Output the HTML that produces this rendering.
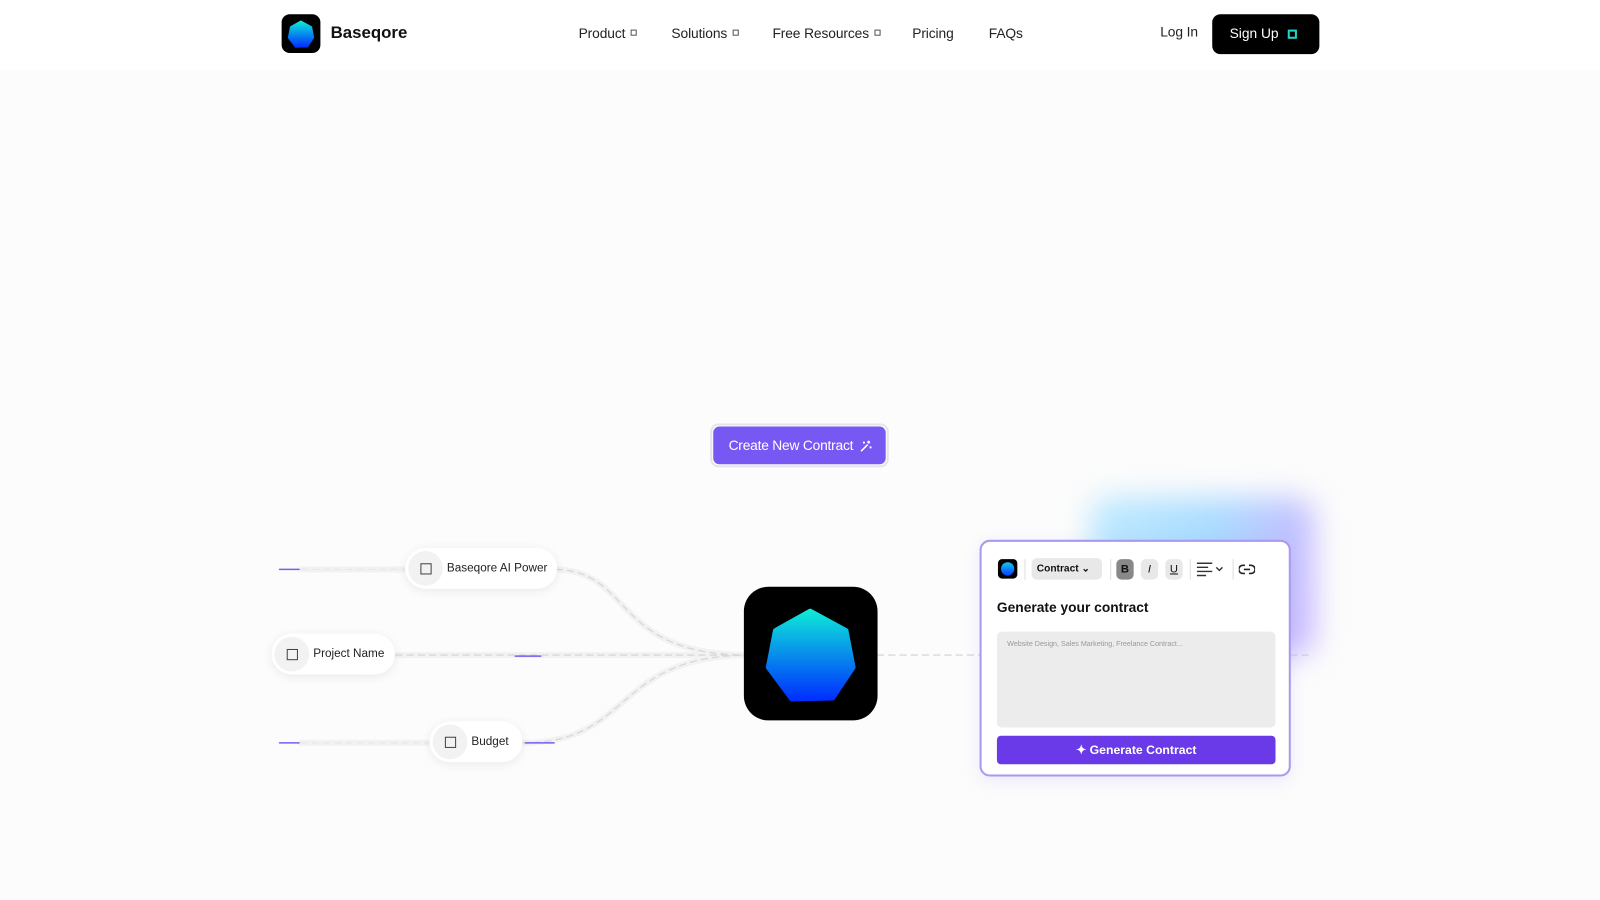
<!DOCTYPE html>
<html><head><meta charset="utf-8">
<style>
*{margin:0;padding:0;box-sizing:border-box}
body{width:1600px;height:900px;background:#fcfcfc;font-family:"Liberation Sans",sans-serif;overflow:hidden;color:#111}
#w{position:absolute;left:0;top:0;width:1568px;height:882px;transform:scale(1.0204);transform-origin:0 0}
.hdr{position:absolute;left:0;top:0;width:1568px;height:68px;background:#fff}
.logo{position:absolute;left:276px;top:14px;width:38px;height:38px;background:#000;border-radius:8px}
.brand{position:absolute;left:324px;top:23px;font-size:16.5px;font-weight:bold;color:#111}
.nav{position:absolute;top:25px;font-size:13.5px;color:#222;letter-spacing:-0.1px}
.sq{display:inline-block;width:6px;height:6px;border:1px solid #555;margin-left:5px;vertical-align:2px}
.signup{position:absolute;left:1188px;top:14px;width:105px;height:39px;background:#000;border-radius:8px;color:#fff;font-size:13.5px;padding:11px 0 0 17px}
.signup i{position:absolute;left:74px;top:15px;width:9px;height:9px;border:2px solid #1fd6c8}
.cta{position:absolute;left:696px;top:415px;width:175px;height:43px;border:2px solid #e4e4ea;border-radius:8px;padding:1px}
.cta div{background:#7858f2;border-radius:6px;height:100%;color:#fff;font-size:13.5px;padding:11px 0 0 15px;position:relative;letter-spacing:-0.2px}
.pill{position:absolute;height:40px;background:#fff;border-radius:20px;box-shadow:0 2px 10px rgba(0,0,0,.08);font-size:11.5px;color:#222}
.pill .ic{position:absolute;left:3px;top:3px;width:34px;height:34px;border-radius:50%;background:#f2f2f3}
.pill .ic:after{content:"";position:absolute;left:12px;top:12px;width:9px;height:9px;border:1px solid #444}
.pill span{position:absolute;left:41px;top:14px;white-space:nowrap}
.center{position:absolute;left:729px;top:575px;width:131px;height:131px;background:#000;border-radius:24px}
.glow{position:absolute;left:1068px;top:488px;width:220px;height:155px;background:linear-gradient(100deg,#bfe9ff,#a9dcff 50%,#cdb3ff);filter:blur(14px);border-radius:20px}
.card{position:absolute;left:960px;top:529px;width:305px;height:232px;background:#fff;border:2px solid #a79af0;border-radius:10px;box-shadow:0 4px 16px rgba(120,100,240,.12)}
.tb{position:absolute;font-size:10px;font-weight:bold}
.ta{position:absolute;left:15px;top:88px;width:273px;height:94px;background:#ececec;border-radius:5px;font-size:7px;color:#999;padding:9px 10px}
.gen{position:absolute;left:15px;top:190px;width:273px;height:28px;background:#6a3ae8;border-radius:4px;color:#fff;font-size:12px;font-weight:bold;text-align:center;padding-top:7px}
.sep{position:absolute;top:17px;width:1px;height:20px;background:#ddd}
</style></head><body><div id="w">
<div class="hdr"></div>
<div class="logo"><svg width="38" height="38" viewBox="0 0 131 131"><defs><linearGradient id="g1" x1="0" y1="0" x2="0" y2="1"><stop offset="0" stop-color="#0ee8d8"/><stop offset="1" stop-color="#0030ff"/></linearGradient></defs><polygon points="65,24 100,43 107,79 87,109 47,110 24,79 31,43" fill="url(#g1)" stroke="url(#g1)" stroke-width="6" stroke-linejoin="round"/></svg></div>
<div class="brand">Baseqore</div>
<div class="nav" style="left:567px">Product<i class="sq"></i></div>
<div class="nav" style="left:658px">Solutions<i class="sq"></i></div>
<div class="nav" style="left:757px">Free Resources<i class="sq"></i></div>
<div class="nav" style="left:894px">Pricing</div>
<div class="nav" style="left:969px">FAQs</div>
<div class="nav" style="left:1137px;top:24px">Log In</div>
<div class="signup">Sign Up<i></i></div>

<div class="cta"><div>Create New Contract<svg style="position:absolute;left:143px;top:13px" width="13" height="13" viewBox="0 0 14 14" stroke="#fff" stroke-width="1.6" fill="none"><path d="M2 12L9 5M10 1v3M8.5 2.5h3M12 7v2M11 8h2M5 2v2M4 3h2"/></svg></div></div>

<svg style="position:absolute;left:0;top:0" width="1568" height="882">
<g fill="none" stroke-linecap="round">
<path d="M295 558H400M545 558C620 560 600 640 729 642M388 642H729M295 728H420M512 728C620 728 600 645 729 642" stroke="#f2f2f2" stroke-width="6"/>
<path d="M545 558C620 560 600 640 729 642M388 642H729M512 728C620 728 600 645 729 642M860 642H960M1265 642H1285" stroke="#d8d8d8" stroke-width="1.3" stroke-dasharray="6 5"/>
<path d="M295 558H400M295 728H420" stroke="#e8e8e8" stroke-width="1.3" stroke-dasharray="6 5"/>
<path d="M274 558H293M274 728H293M505 643H530M515 728H543" stroke="#7a5cf0" stroke-width="1.5"/>
</g></svg>

<div class="pill" style="left:397px;top:537px;width:149px"><div class="ic"></div><span>Baseqore AI Power</span></div>
<div class="pill" style="left:266px;top:621px;width:121px"><div class="ic"></div><span>Project Name</span></div>
<div class="pill" style="left:421px;top:707px;width:91px"><div class="ic"></div><span>Budget</span></div>

<div class="center"><svg width="131" height="131" viewBox="0 0 131 131"><defs><linearGradient id="g2" x1="0" y1="0" x2="0" y2="1"><stop offset="0" stop-color="#0ee8d8"/><stop offset="1" stop-color="#0030ff"/></linearGradient></defs><polygon points="65,24 100,43 107,79 87,109 47,110 24,79 31,43" fill="url(#g2)" stroke="url(#g2)" stroke-width="5" stroke-linejoin="round"/></svg></div>

<div class="glow"></div>
<div class="card">
<div style="position:absolute;left:16px;top:17px;width:19px;height:19px;background:#000;border-radius:4px"><div style="position:absolute;left:3px;top:3px;width:13px;height:13px;border-radius:50%;background:linear-gradient(#14c8f0,#0040ff)"></div></div>
<div class="sep" style="left:42px"></div>
<div class="tb" style="left:49px;top:16px;width:69px;height:21px;background:#e8e8e8;border-radius:5px;padding:5px 0 0 5px">Contract ⌄</div>
<div class="sep" style="left:126px"></div>
<div class="tb" style="left:132px;top:17px;width:17px;height:20px;background:#888;border-radius:5px;text-align:center;padding-top:4px;font-size:11px">B</div>
<div class="tb" style="left:156px;top:17px;width:17px;height:20px;background:#e8e8e8;border-radius:5px;text-align:center;padding-top:4px;font-style:italic;font-weight:normal;font-size:11px">I</div>
<div class="tb" style="left:180px;top:17px;width:17px;height:20px;background:#e8e8e8;border-radius:5px;text-align:center;padding-top:4px;text-decoration:underline;font-weight:normal;font-size:11px">U</div>
<div class="sep" style="left:204px"></div>
<svg style="position:absolute;left:210px;top:19px" width="30" height="16" viewBox="0 0 30 16" stroke="#333" stroke-width="1.4" fill="none"><path d="M1 2h15M1 6h11M1 10h15M1 14h9M20 6l3 3 3-3"/></svg>
<div class="sep" style="left:246px"></div>
<svg style="position:absolute;left:252px;top:21px" width="16" height="12" viewBox="0 0 16 12" stroke="#222" stroke-width="1.6" fill="none"><path d="M6 2H4a4 4 0 0 0 0 8h2M10 2h2a4 4 0 0 1 0 8h-2M5 6h6"/></svg>
<div style="position:absolute;left:15px;top:57px;font-size:13.5px;font-weight:bold">Generate your contract</div>
<div class="ta">Website Design, Sales Marketing, Freelance Contract...</div>
<div class="gen">✦ Generate Contract</div>
</div>
</div></body></html>
